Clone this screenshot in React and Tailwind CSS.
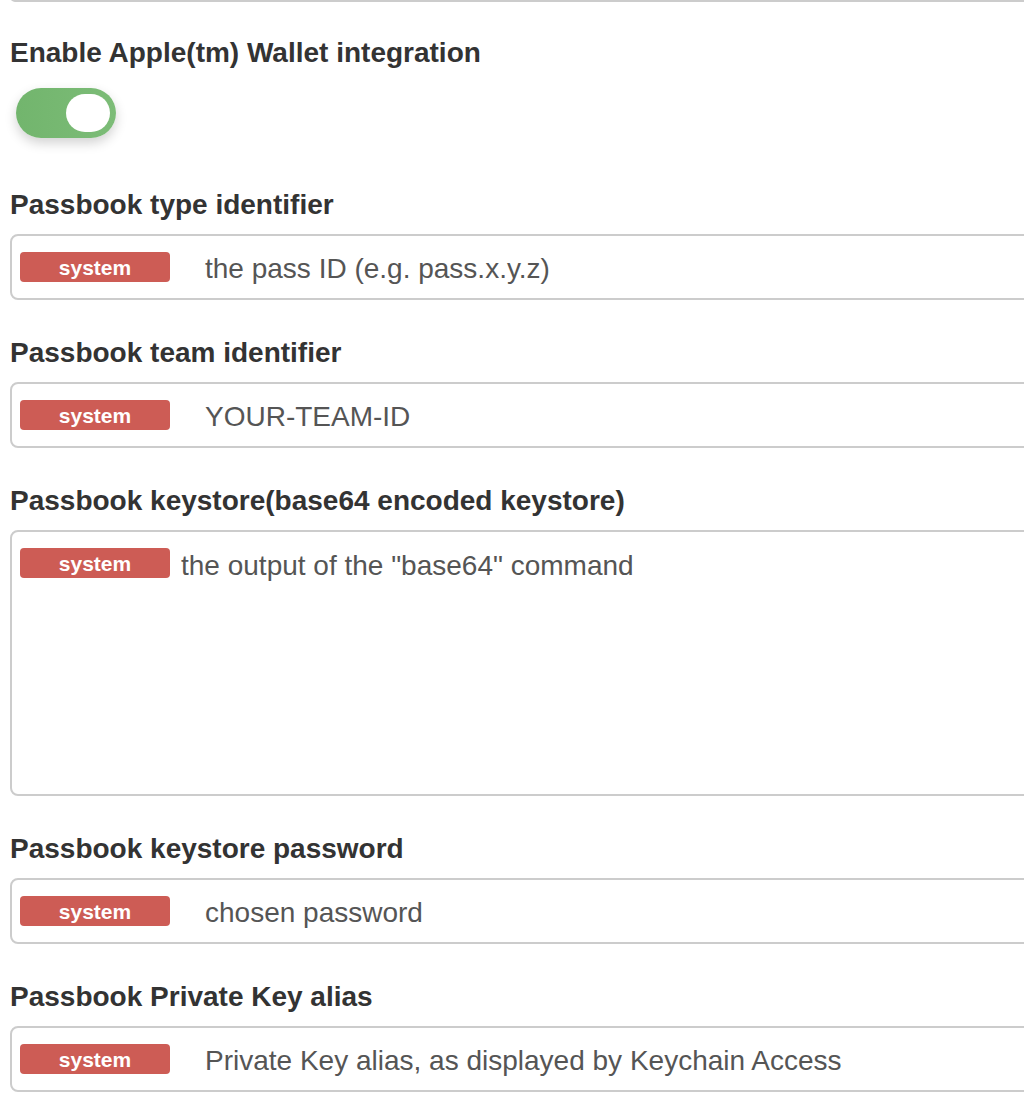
import React from "react";

const font = { fontFamily: '"Liberation Sans", Arial, Helvetica, sans-serif' };

function Badge({ className = "" }) {
  return (
    <span className={"flex h-[30px] w-[150px] shrink-0 items-center justify-center rounded-[4px] bg-[#cd5c55] text-[21px] font-bold leading-none text-white " + className}>
      system
    </span>
  );
}

function Label({ children, className = "" }) {
  return (
    <div className={"text-[28px] font-bold leading-[40px] text-[#333333] " + className}>
      {children}
    </div>
  );
}

function InputBox({ text }) {
  return (
    <div className="mt-[9px] flex h-[66px] w-[1100px] items-center rounded-[8px] border-2 border-[#cccccc] bg-white pl-[8px]">
      <Badge />
      <span className="ml-[35px] whitespace-nowrap pt-[4px] text-[28px] leading-[40px] text-[#555555]">{text}</span>
    </div>
  );
}

export default function App() {
  return (
    <div className="h-[1116px] w-[1024px] overflow-hidden bg-white" style={font}>
      <div className="pl-[10px]">
        <div className="mt-[-8px] h-[10px] w-[1100px] rounded-[8px] border-2 border-[#cccccc]" />

        <Label className="mt-[31px]">Enable Apple(tm) Wallet integration</Label>
        <div className="ml-[6px] mt-[15px] flex h-[50px] w-[100px] items-center justify-end rounded-full bg-gradient-to-r from-[#72b56d] to-[#7cbc77] pr-[6px] shadow-[0_5px_12px_rgba(0,0,0,0.18)]">
          <div className="h-[38px] w-[44px] rounded-full bg-white" />
        </div>

        <Label className="mt-[47px]">Passbook type identifier</Label>
        <InputBox text="the pass ID (e.g. pass.x.y.z)" />

        <Label className="mt-[33px]">Passbook team identifier</Label>
        <InputBox text="YOUR-TEAM-ID" />

        <Label className="mt-[33px]">Passbook keystore(base64 encoded keystore)</Label>
        <div className="mt-[9px] h-[266px] w-[1100px] rounded-[8px] border-2 border-[#cccccc] bg-white pl-[8px] pt-[11px]">
          <div className="flex items-start">
            <Badge className="mt-[5px]" />
            <span className="ml-[11px] whitespace-nowrap pt-[3px] text-[28px] leading-[40px] text-[#555555]">
              the output of the "base64" command
            </span>
          </div>
        </div>

        <Label className="mt-[33px]">Passbook keystore password</Label>
        <InputBox text="chosen password" />

        <Label className="mt-[33px]">Passbook Private Key alias</Label>
        <InputBox text="Private Key alias, as displayed by Keychain Access" />
      </div>
    </div>
  );
}
